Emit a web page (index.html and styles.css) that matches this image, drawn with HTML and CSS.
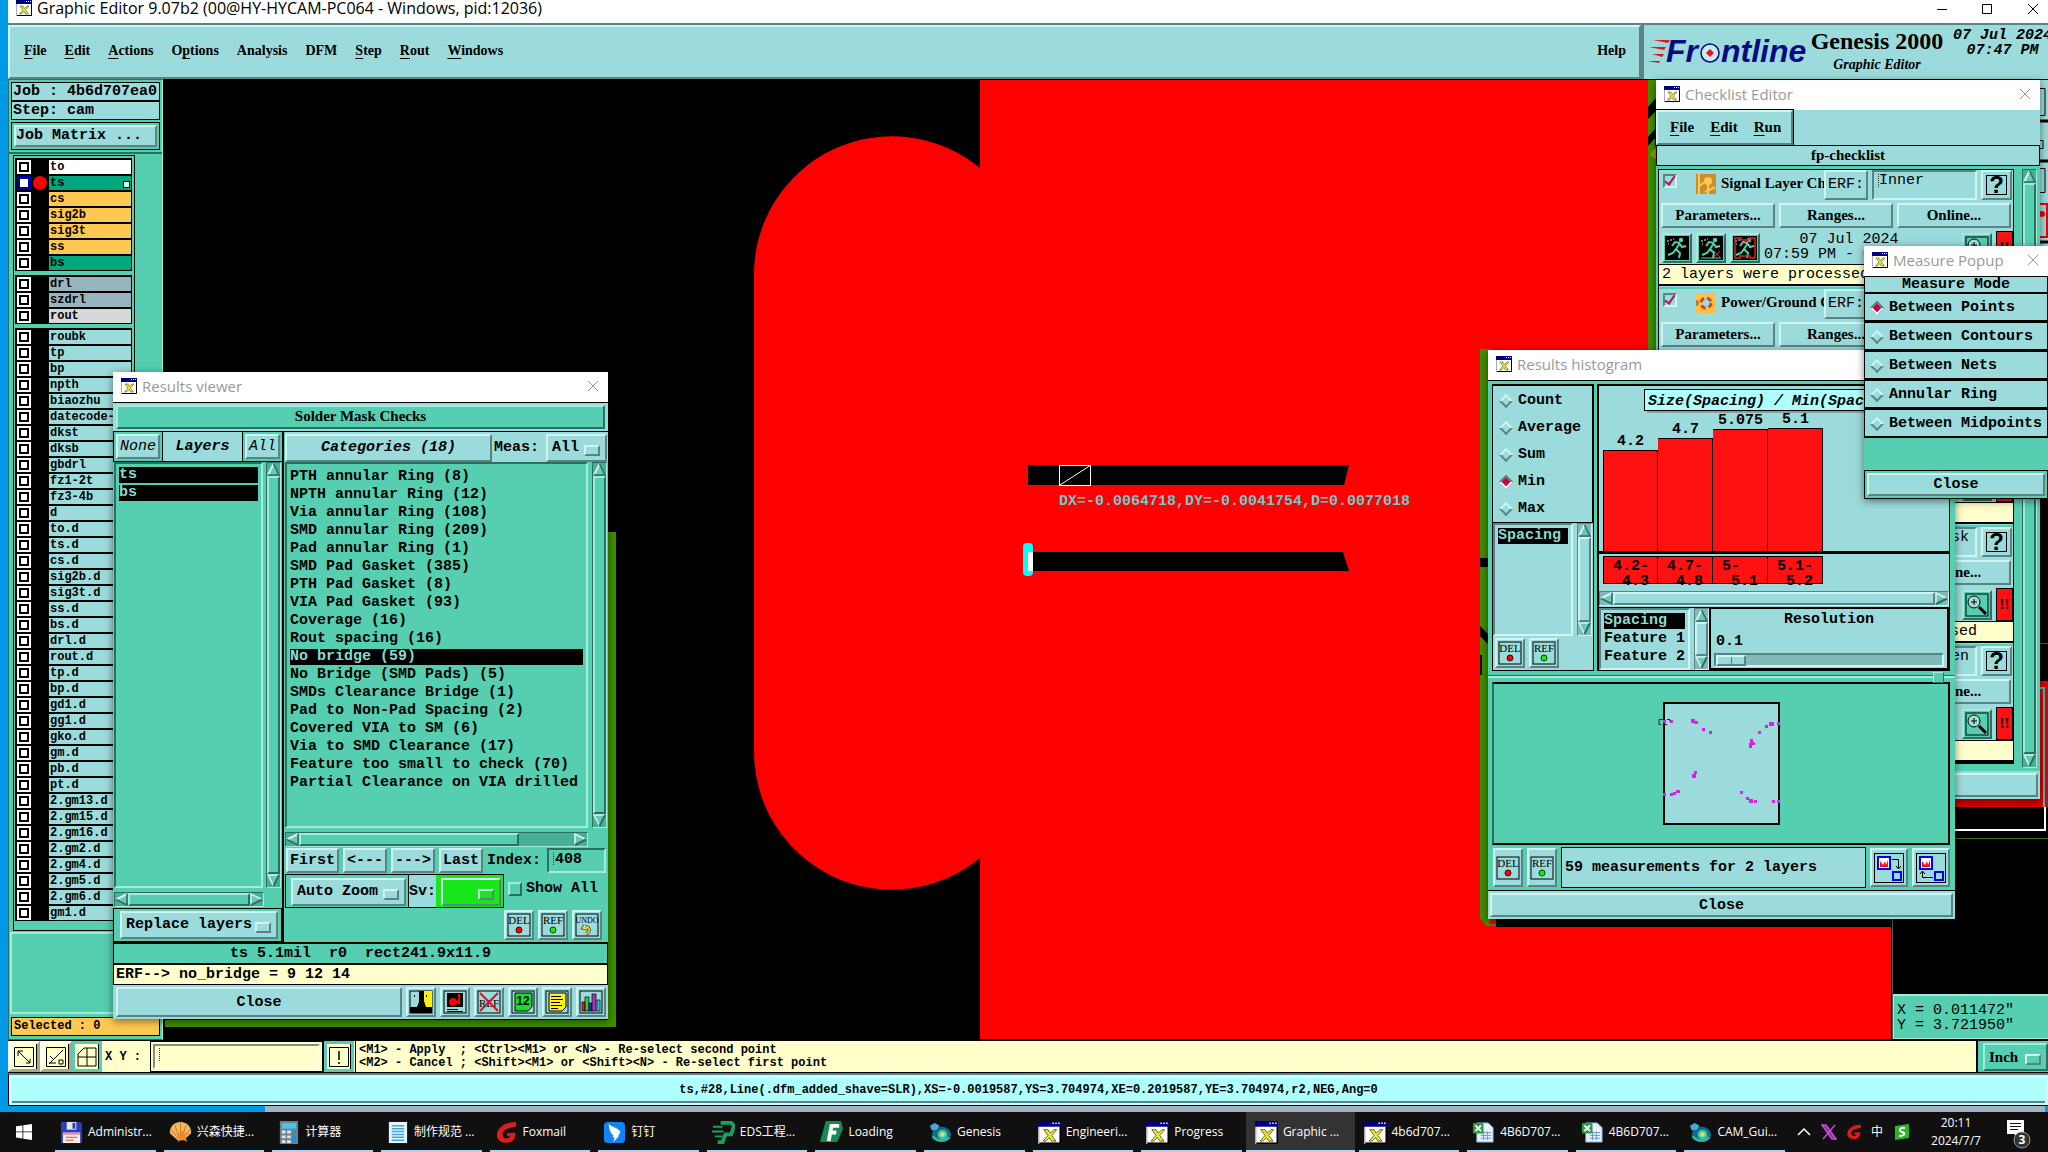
FILE: index.html
```
<!DOCTYPE html>
<html lang="en">
<head>
    <meta charset="UTF-8">
    <meta name="viewport" content="width=device-width, initial-scale=1.0">
    <title>Graphic Editor</title>
    <link rel="stylesheet" href="styles.css">
</head>
<body>

    <!-- shared icons -->
    <svg class="defs" width="0" height="0">
        <symbol id="xwin" viewBox="0 0 16 16">
            <rect width="16" height="16" fill="#aab"/>
            <rect x="1" y="1" width="14" height="14" fill="#fff"/>
            <rect width="16" height="4" fill="#00007c"/>
            <path d="M10 1h1v1h-1zM12 1h1v1h-1zM14 1h1v1h-1z" fill="#fff"/>
            <path d="M15.500 4v11.500H1" fill="none" stroke="#000"/>
            <path d="M4 6h3l1.500 2.500L11 6h2L9.500 10l3 4h-3L8 11.500 5.500 14h-2L7 10z" fill="#f2ea20" stroke="#333" stroke-width=".5"/>
        </symbol>
        <symbol id="close-x" viewBox="0 0 12 12"><path d="M1 1l10 10M11 1L1 11" fill="none" stroke="currentColor"/></symbol>
        <symbol id="up" viewBox="0 0 13 13">
            <path d="M6.500 1L1 12h11z" fill="#6ac8ba"/>
            <path d="M6.500 1L1 12" stroke="#d3f5f1" stroke-width="2"/>
            <path d="M6.500 1L12 12H1" stroke="#2c6f62" stroke-width="1.500" fill="none"/>
        </symbol>
        <symbol id="down" viewBox="0 0 13 13">
            <path d="M6.500 12L1 1h11z" fill="#6ac8ba"/>
            <path d="M12 1H1l5.500 11" stroke="#d3f5f1" stroke-width="1.500" fill="none"/>
            <path d="M6.500 12L12 1" stroke="#2c6f62" stroke-width="2"/>
        </symbol>
        <symbol id="left" viewBox="0 0 13 13">
            <path d="M1 6.500L12 1v11z" fill="#6ac8ba"/>
            <path d="M1 6.500L12 1" stroke="#d3f5f1" stroke-width="2"/>
            <path d="M1 6.500L12 12V1" stroke="#2c6f62" stroke-width="1.500" fill="none"/>
        </symbol>
        <symbol id="right" viewBox="0 0 13 13">
            <path d="M12 6.500L1 1v11z" fill="#6ac8ba"/>
            <path d="M1 12V1l11 5.500" stroke="#d3f5f1" stroke-width="1.500" fill="none"/>
            <path d="M12 6.500L1 12" stroke="#2c6f62" stroke-width="2"/>
        </symbol>
        <symbol id="del" viewBox="0 0 24 24">
            <rect x="1" y="1" width="22" height="22" fill="none" stroke="#000"/>
            <text x="12" y="11" class="ico-text">DEL</text>
            <circle cx="12" cy="17" r="3" fill="#f00" stroke="#400"/>
        </symbol>
        <symbol id="ref" viewBox="0 0 24 24">
            <rect x="1" y="1" width="22" height="22" fill="none" stroke="#000"/>
            <text x="12" y="11" class="ico-text">REF</text>
            <circle cx="12" cy="17" r="3" fill="#1e1" stroke="#040"/>
        </symbol>
        <symbol id="runner" viewBox="0 0 24 24">
            <rect width="24" height="24" fill="#000"/>
            <circle cx="16" cy="4" r="2.200" fill="#55d0b0"/>
            <path d="M15 7l-4 6 4 4-1 5M11 13l-3 4-5 2M15 7l-5-1-3 4M15 8l2 3 4-1" stroke="#55d0b0" stroke-width="2" fill="none"/>
            <path d="M2 5h2M5 4h2M3 8h1M8 3h1" stroke="#cfe"/>
        </symbol>
        <symbol id="lens" viewBox="0 0 24 24">
            <rect x="1" y="1" width="22" height="22" fill="#55cfb0" stroke="#000"/>
            <circle cx="9" cy="9" r="6" fill="#9fe0d4" stroke="#000"/>
            <path d="M6 9h6M9 6v6" stroke="#000"/>
            <path d="M14 14l7 7" stroke="#000" stroke-width="3"/>
        </symbol>
        <symbol id="genesis" viewBox="0 0 24 24">
            <ellipse cx="13" cy="14" rx="10" ry="8" fill="#0d6f86"/>
            <path d="M4 16a10 8 0 0 0 17 1" stroke="#2fb5a0" stroke-width="3" fill="none"/>
            <circle cx="14" cy="14" r="5" fill="#39c7b4"/>
            <circle cx="14" cy="14" r="2.500" fill="#e6d95a"/>
            <path d="M1 5l5-3 5 3-3 4-5 1z" fill="#4aa6d8"/>
        </symbol>
        <symbol id="excel" viewBox="0 0 24 24">
            <path d="M5 2h12l5 5v15H5z" fill="#e8f1fb" stroke="#8aa8cc"/>
            <path d="M9 12h11M9 15h11M9 18h11M12 11v9M16 11v9" stroke="#6c96cc"/>
            <rect x="1" y="2" width="11" height="11" rx="1" fill="#2f9a44"/>
            <path d="M3.500 4.500l6 6M9.500 4.500l-6 6" stroke="#fff" stroke-width="2"/>
        </symbol>
    </svg>

    <main class="desktop">
        <div class="behind"></div>

        <section class="editor">
            <header class="titlebar">
                <svg class="xicon"><use href="#xwin"/></svg>
                <span>Graphic Editor 9.07b2 (00@HY-HYCAM-PC064 - Windows, pid:12036)</span>
                <svg class="win-ctl" viewBox="0 0 110 12"><path d="M9 7.500h10M54.500 2.500h9v9h-9zM100 2l10 10M110 2l-10 10" fill="none" stroke="#000"/></svg>
            </header>

            <div class="menu-row">
                <nav class="menubar">
                    <a href="#"><u>F</u>ile</a>
                    <a href="#"><u>E</u>dit</a>
                    <a href="#"><u>A</u>ctions</a>
                    <a href="#">O<u>p</u>tions</a>
                    <a href="#">Analysis</a>
                    <a href="#">DFM</a>
                    <a href="#"><u>S</u>tep</a>
                    <a href="#"><u>R</u>out</a>
                    <a href="#"><u>W</u>indows</a>
                    <a href="#" class="help">Help</a>
                </nav>
                <div class="brand">
                    <svg class="logo" viewBox="0 0 162 34">
                        <path d="M6 6h17l-2 3zM2 13h17l-2 3zM5 20h12l-2 3zM0 27h13l-1 2z" fill="#e8121e"/>
                        <text x="19" y="28" class="logo-text">Fr</text>
                        <text x="74" y="28" class="logo-text">ntline</text>
                        <circle cx="63" cy="19" r="9" fill="#c9ecf2" stroke="#0a0a82" stroke-width="1.500"/>
                        <path d="M63 15l4 4-4 4-4-4z" fill="#f01020"/>
                    </svg>
                    <div class="product">
                        <b>Genesis 2000</b>
                        <i>Graphic Editor</i>
                    </div>
                    <div class="clock">07 Jul 2024<br>07:47 PM</div>
                </div>
            </div>

            <div class="work">
                <aside class="side">
                    <div class="side-top">
                        <div class="field">Job : 4b6d707ea0</div>
                        <div class="field">Step: cam</div>
                        <div class="matrix"><button class="btn">Job Matrix ...</button></div>
                    </div>
                    <div class="layers" id="layers"></div>
                    <div class="side-fill"></div>
                    <div class="selected">Selected : 0</div>
                </aside>

                <div class="canvas">
                    <svg class="art" viewBox="163 79 1885 961" preserveAspectRatio="xMinYMin slice">
                        <rect x="163" y="79" width="1885" height="961" fill="#000"/>
                        <rect x="980" y="80" width="911" height="959" fill="#f00"/>
                        <path d="M980 168A138 138 0 0 0 754 274V752A138 138 0 0 0 980 858z" fill="#f00"/>
                        <!-- slots -->
                        <path d="M1028 465h321l-5 20h-316zM1028 552h315l6 19h-321z" fill="#000"/>
                        <rect x="1059.500" y="465.500" width="31" height="20" fill="none" stroke="#fff"/>
                        <path d="M1060 485l31-20" stroke="#fff"/>
                        <rect x="1023" y="543" width="10" height="33" rx="4" fill="#0ff"/>
                        <rect x="1028" y="552" width="5" height="19" fill="#fff"/>
                        <text x="1059" y="505" class="measure-text">DX=-0.0064718,DY=-0.0041754,D=0.0077018</text>
                        <!-- green outlines behind the windows -->
                        <path d="M608 532h8v495H165v-7h443z" fill="#3f8f00"/>
                        <path d="M1648 80h10v270h-10zM1480 349h10v575h6v2h-10l-6-8z" fill="#3f8f00"/>
                        <path d="M1648 107l8-9v13l-8 8zM1648 137l8-9v9l-8 9zM1480 558h8v9h-8zM1480 626l8 8v10l-8-8zM1480 655h2v20h-2z" fill="#000"/>
                        <circle cx="1656" cy="154" r="5" fill="#9a9a10"/>
                        <path d="M1496 918h396v9h-396z" fill="#000"/>
                        <rect x="1891" y="80" width="157" height="960" fill="#000"/>
                        <path d="M1892.500 919v120" stroke="#2f6558"/>
                        <path d="M1955 681h93v126h-93z" fill="#e00000"/>
                        <path d="M1955 688h89v119" fill="none" stroke="#4bb" stroke-width="2"/>
                        <path d="M2045 807v23h-90" fill="none" stroke="#fff" stroke-width="2"/>
                        <path d="M2040 643.500h8M1955 838.500h93" stroke="#3c6f10"/>
                        <rect x="2040" y="80" width="8" height="175" fill="#9cdbdb"/>
                        <path d="M2040 121h8M2040 161h8M2040 242h8" stroke="#000" stroke-width="3"/>
                        <path d="M2040 88.500h5v27h-5M2040 140.500h3v8h-3M2040 168.500h5v24h-5" stroke="#000" fill="none"/>
                        <path d="M2040 204h7v33h-7" stroke="#e00" stroke-width="2" fill="none"/>
                        <circle cx="2042" cy="214" r="3" fill="#e00"/>
                    </svg>
                    <div class="coords">X = 0.011472"<br>Y = 3.721950"</div>
                </div>
            </div>

            <div class="command">
                <button class="tool" aria-label="Snap"><svg viewBox="0 0 20 20"><path d="M.500 .500h19v19H.500zM4 4l12 12M4 9V4h5M16 12v4h-4" fill="none" stroke="#000"/></svg></button>
                <button class="tool" aria-label="Angle"><svg viewBox="0 0 20 20"><path d="M.500 .500h19v19H.500zM3 17L17 3M4 9l3 3M3 16h7M13 13h4v4h-4z" fill="none" stroke="#000"/></svg></button>
                <button class="tool teal" aria-label="Grid"><svg viewBox="0 0 20 20"><path d="M1 7l6-6h12v18H1z" fill="#ffffcc" stroke="#000"/><path d="M1 10h18M10 1v18" stroke="#000"/></svg></button>
                <label class="xy" for="xy">X Y :</label>
                <div class="xy-box"><input id="xy" class="caret" type="text"></div>
                <button class="tool teal alert" aria-label="Alert"><svg viewBox="0 0 20 20"><path d="M.500 .500h19v19H.500z" fill="#ffffcc" stroke="#000"/><path d="M10 4v9M10 15v2" stroke="#000" stroke-width="1.500"/></svg></button>
                <pre class="hint">&lt;M1&gt; - Apply  ; &lt;Ctrl&gt;&lt;M1&gt; or &lt;N&gt; - Re-select second point
&lt;M2&gt; - Cancel ; &lt;Shift&gt;&lt;M1&gt; or &lt;Shift&gt;&lt;N&gt; - Re-select first point</pre>
                <div class="unit"><span class="pick green"><select aria-label="Units"><option>Inch</option></select></span></div>
            </div>

            <footer class="status"><div>ts,#28,Line(.dfm_added_shave=SLR),XS=-0.0019587,YS=3.704974,XE=0.2019587,YE=3.704974,r2,NEG,Ang=0</div></footer>
        </section>

        <!-- Results viewer -->
        <section class="window viewer">
            <header class="wtitle"><svg class="xicon"><use href="#xwin"/></svg><span>Results viewer</span><svg class="x"><use href="#close-x"/></svg></header>
            <div class="vhead"><div>Solder Mask Checks</div></div>
            <div class="vbody">
                <div class="vleft">
                    <div class="lhead">
                        <span class="cell"><button class="btn thin">None</button></span>
                        <span class="lname">Layers</span>
                        <span class="cell"><button class="btn thin">All</button></span>
                    </div>
                    <div class="scroller">
                        <ul class="list"><li class="on">ts</li><li class="on">bs</li></ul>
                        <div class="sb"><svg><use href="#up"/></svg><i></i><svg><use href="#down"/></svg></div>
                    </div>
                    <div class="hsb short"><svg><use href="#left"/></svg><i></i><svg><use href="#right"/></svg></div>
                    <div class="replace"><span class="pick"><select aria-label="Layer mode"><option>Replace layers</option></select></span></div>
                </div>
                <div class="vright">
                    <div class="rhead">
                        <button class="btn cat">Categories (18)</button>
                        <label for="meas">Meas:</label>
                        <span class="pick"><select id="meas"><option>All</option></select></span>
                    </div>
                    <div class="scroller">
                        <ul class="list" id="categories"></ul>
                        <div class="sb"><svg><use href="#up"/></svg><i></i><svg><use href="#down"/></svg></div>
                    </div>
                    <div class="hsb"><svg><use href="#left"/></svg><i></i><b></b><svg><use href="#right"/></svg></div>
                    <div class="steps">
                        <button class="btn">First</button>
                        <button class="btn">&lt;---</button>
                        <button class="btn">---&gt;</button>
                        <button class="btn">Last</button>
                        <label for="index">Index:</label>
                        <input id="index" class="caret" type="text" value="408">
                    </div>
                    <div class="zoomrow">
                        <span class="zbox"><span class="pick"><select aria-label="Zoom mode"><option>Auto Zoom</option></select></span></span>
                        <label class="sv" for="sv">Sv:</label>
                        <span class="svbox"><span class="pick lime"><select id="sv"><option></option></select></span></span>
                        <label class="show"><input type="checkbox">Show All</label>
                    </div>
                    <div class="marks">
                        <button class="btn ico" aria-label="Delete"><svg><use href="#del"/></svg></button>
                        <button class="btn ico" aria-label="Reference"><svg><use href="#ref"/></svg></button>
                        <button class="btn ico" aria-label="Undo"><svg viewBox="0 0 24 24"><rect x="1" y="1" width="22" height="22" fill="none" stroke="#000"/><text x="12" y="10" class="ico-text small">UNDO</text><path d="M10 12l-2 3 4 1M9 14c6-1 7 5 2 7" fill="none" stroke="#333" stroke-width="3"/><path d="M10 12l-2 3 4 1M9 14c6-1 7 5 2 7" fill="none" stroke="#f6e83c" stroke-width="1.500"/></svg></button>
                    </div>
                </div>
            </div>
            <pre class="feature">ts 5.1mil  r0  rect241.9x11.9</pre>
            <div class="erf-line">ERF--&gt; no_bridge = 9 12 14</div>
            <div class="vfoot">
                <button class="btn wide">Close</button>
                <button class="btn ico" aria-label="Compare"><svg viewBox="0 0 24 24"><rect x="1" y="1" width="22" height="22" fill="#9cdbdb" stroke="#000"/><path d="M14 1h9v17h-9z" fill="#ffee10"/><path d="M10 1h5v10l2 6h6v6H1v-6h7l2-5zM5 5h1v2H5zM17 5h1v2h-1z" fill="#000"/></svg></button>
                <button class="btn ico" aria-label="Snapshot"><svg viewBox="0 0 24 24"><rect x="1" y="1" width="22" height="22" fill="none" stroke="#000"/><rect x="4" y="3" width="16" height="14" fill="#000"/><circle cx="10" cy="12" r="4" fill="#f00"/><path d="M12 12h5M16 4v10" stroke="#f00" stroke-width="2"/><path d="M4 19.500h11M4 21.500h16" stroke="#000"/></svg></button>
                <button class="btn ico" aria-label="Clear reference"><svg viewBox="0 0 24 24"><rect x="1" y="1" width="22" height="22" fill="none" stroke="#000"/><text x="12" y="17" class="ico-text">REF</text><path d="M3 3l18 18M21 3L3 21" stroke="#e01020" stroke-width="2"/></svg></button>
                <button class="btn ico" aria-label="Numbers"><svg viewBox="0 0 24 24"><rect x="1" y="1" width="22" height="22" fill="none" stroke="#000"/><path d="M4 3h17v14l-4 4H4z" fill="#10e030" stroke="#000"/><text x="12" y="15" class="ico-num">12</text></svg></button>
                <button class="btn ico" aria-label="Notes"><svg viewBox="0 0 24 24"><rect x="1" y="1" width="22" height="22" fill="none" stroke="#000"/><path d="M4 3h17v14l-4 4H4z" fill="#fff020" stroke="#000"/><path d="M6 6.500h10M6 9.500h12M6 12.500h9M6 15.500h11M6 18.500h7" stroke="#000"/></svg></button>
                <button class="btn ico" aria-label="Histogram"><svg viewBox="0 0 24 24"><rect x="1" y="1" width="22" height="22" fill="none" stroke="#000"/><g stroke="#000" stroke-width=".7"><rect x="3" y="12" width="3" height="9" fill="#e02020"/><rect x="6" y="7" width="4" height="14" fill="#20d040"/><rect x="10" y="13" width="3" height="8" fill="#2030e0"/><rect x="13" y="4" width="4" height="17" fill="#b030c0"/><rect x="18" y="10" width="3" height="11" fill="#20d0f0"/></g></svg></button>
            </div>
        </section>

        <!-- Checklist Editor -->
        <section class="window checklist">
            <header class="wtitle"><svg class="xicon"><use href="#xwin"/></svg><span>Checklist Editor</span><svg class="x"><use href="#close-x"/></svg></header>
            <div class="cmenu"><nav><a href="#"><u>F</u>ile</a><a href="#"><u>E</u>dit</a><a href="#"><u>R</u>un</a></nav></div>
            <div class="cname">fp-checklist</div>
            <div class="cbody">
                <div class="checks" id="checks"></div>
                <div class="sb"><svg><use href="#up"/></svg><i></i><svg><use href="#down"/></svg></div>
            </div>
            <div class="cfoot"><button class="btn">Close</button></div>
        </section>

        <!-- Results histogram -->
        <section class="window histogram">
            <header class="wtitle"><svg class="xicon"><use href="#xwin"/></svg><span>Results histogram</span></header>
            <div class="hbody">
                <div class="hleft">
                    <div class="radios">
                        <label><input type="radio" name="stat">Count</label>
                        <label><input type="radio" name="stat">Average</label>
                        <label><input type="radio" name="stat">Sum</label>
                        <label><input type="radio" name="stat" checked>Min</label>
                        <label><input type="radio" name="stat">Max</label>
                    </div>
                    <div class="scroller pale">
                        <ul class="list"><li class="on">Spacing</li></ul>
                        <div class="sb"><svg><use href="#up"/></svg><i></i><svg><use href="#down"/></svg></div>
                    </div>
                    <div class="marks">
                        <button class="btn ico" aria-label="Delete"><svg><use href="#del"/></svg></button>
                        <button class="btn ico" aria-label="Reference"><svg><use href="#ref"/></svg></button>
                    </div>
                </div>
                <div class="hright">
                    <div class="chart">
                        <div class="ctitle">Size(Spacing) / Min(Spacing)</div>
                        <div class="bars">
                            <div><span>4.2</span><i style="height: 101px"></i></div>
                            <div><span>4.7</span><i style="height: 113px"></i></div>
                            <div><span>5.075</span><i style="height: 122px"></i></div>
                            <div><span>5.1</span><i style="height: 123px"></i></div>
                        </div>
                        <div class="bins">
                            <pre>4.2-
 4.3</pre>
                            <pre>4.7-
 4.8</pre>
                            <pre>5-
 5.1</pre>
                            <pre>5.1-
 5.2</pre>
                        </div>
                    </div>
                    <div class="hsb pale"><svg><use href="#left"/></svg><i></i><svg><use href="#right"/></svg></div>
                    <div class="reso-row">
                        <div class="scroller pale">
                            <ul class="list"><li class="on">Spacing</li><li>Feature 1</li><li>Feature 2</li></ul>
                            <div class="sb"><svg><use href="#up"/></svg><i></i><svg><use href="#down"/></svg></div>
                        </div>
                        <div class="reso">
                            <label for="reso">Resolution</label>
                            <output for="reso">0.1</output>
                            <input id="reso" type="range" min="0" max="100" value="0">
                        </div>
                    </div>
                </div>
            </div>
            <div class="sash"></div>
            <div class="board">
                <svg viewBox="0 0 117 123">
                    <rect x="1" y="1" width="115" height="121" fill="#9cdbdb" stroke="#000" stroke-width="2"/>
                    <g fill="#d820e8">
                        <path d="M0 18h3v3H0zM7 18h3v3H7zM28 17h4v4h-4zM31 19h4v3h-4zM39 26h3v3h-3zM46 29h3v3h-3z"/>
                        <path d="M87 37h3v3h2v3h-3v3h-3v-5h1zM95 29h3v3h-3zM102 23h3v3h-3zM106 20h5v4h-5zM114 20h3v3h-3z"/>
                        <path d="M31 69h3v3h-1v4h-4v-4h2zM0 91h3v3H0zM7 91h3v3H7zM10 90h3v3h-3zM13 88h4v3h-4zM77 89h3v3h-3zM83 95h3v3h-3zM86 97h4v4h-4zM91 98h3v3h-3zM109 98h3v3h-3zM114 98h3v3h-3z"/>
                    </g>
                    <path d="M0 17.500h-4v5h2M4 22.500H2M4 17.500h3v2" stroke="#222" fill="none"/>
                </svg>
            </div>
            <div class="mrow">
                <button class="btn ico" aria-label="Delete"><svg><use href="#del"/></svg></button>
                <button class="btn ico" aria-label="Reference"><svg><use href="#ref"/></svg></button>
                <div class="mtext">59 measurements for 2 layers</div>
                <button class="btn big" aria-label="Export"><svg viewBox="0 0 30 30"><rect x=".500" y=".500" width="29" height="29" fill="none" stroke="#000"/><rect x="4" y="4" width="12" height="12" fill="#fff" stroke="#00f" stroke-width="2"/><path d="M6 14V8l3 4 2-4 1 4 2-5v7z" fill="#f01020"/><rect x="19" y="19" width="8" height="8" fill="#9cdbdb" stroke="#00f" stroke-width="2"/><path d="M18 6.500h6.500V16M22 13l2.500 3 2.500-3" fill="none" stroke="#000"/></svg></button>
                <button class="btn big" aria-label="Import"><svg viewBox="0 0 30 30"><rect x=".500" y=".500" width="29" height="29" fill="none" stroke="#000"/><rect x="4" y="4" width="12" height="12" fill="#fff" stroke="#00f" stroke-width="2"/><path d="M6 14V8l3 4 2-4 1 4 2-5v7z" fill="#f01020"/><rect x="19" y="19" width="8" height="8" fill="#9cdbdb" stroke="#00f" stroke-width="2"/><path d="M17 24.500H6.500V19M4 21l2.500-3L9 21" fill="none" stroke="#000"/></svg></button>
            </div>
            <div class="hfoot"><button class="btn">Close</button></div>
        </section>

        <!-- Measure Popup -->
        <section class="window measure">
            <header class="wtitle"><svg class="xicon"><use href="#xwin"/></svg><span>Measure Popup</span><svg class="x"><use href="#close-x"/></svg></header>
            <div class="mhead">Measure Mode</div>
            <div class="modes">
                <label><input type="radio" name="mode" checked>Between Points</label>
                <label><input type="radio" name="mode">Between Contours</label>
                <label><input type="radio" name="mode">Between Nets</label>
                <label><input type="radio" name="mode">Annular Ring</label>
                <label><input type="radio" name="mode">Between Midpoints</label>
            </div>
            <div class="mfoot"><button class="btn">Close</button></div>
        </section>
    </main>

    <nav class="taskbar">
        <button class="start" aria-label="Start"><svg viewBox="0 0 16 16"><path d="M0 2.300l6.500-.9v6.100H0zM7.300 1.300L16 0v7.500H7.300zM0 8.300h6.500v6.200L0 13.600zM7.300 8.300H16V16l-8.700-1.300z" fill="#fff"/></svg></button>
        <div class="tasks">
            <button><svg viewBox="0 0 24 24"><path d="M1 1h20l2 2v20H1z" fill="#2c3fb8"/><rect x="7" y="1" width="10" height="8" fill="#e4e8f4"/><rect x="13" y="2" width="3" height="6" fill="#2c3fb8"/><rect x="3" y="12" width="18" height="11" fill="#f6eaea"/><path d="M3 13.500h18M6 17h12M6 20h8" stroke="#d44"/></svg>Administr...</button>
            <button><svg viewBox="0 0 24 24"><path d="M12 1C5 1 0 7 1 13l8 7h6l8-7c1-6-4-12-11-12z" fill="#f3b85e"/><path d="M12 2v17M6 4l5 15M18 4l-5 15M2 9l8 10M22 9l-8 10" stroke="#c97c1e" fill="none"/><path d="M14 9l2 4h5l-4 3 2 6-5-3-5 3 2-6-4-3h5z" fill="#f08a24"/></svg>兴森快捷...</button>
            <button><svg viewBox="0 0 24 24"><rect x="3" y="0" width="19" height="24" fill="#6f7f8c"/><rect x="5" y="2" width="15" height="6" fill="#46c4ec"/><path d="M5 10h4v3H5zM10.500 10h4v3h-4zM5 15h4v3H5zM10.500 15h4v3h-4zM5 20h4v3H5zM10.500 20h4v3h-4z" fill="#dde6ee"/><path d="M16 10h4v3h-4zM16 15h4v8h-4z" fill="#2b8ed0"/></svg>计算器</button>
            <button><svg viewBox="0 0 24 24"><path d="M3 1h19v22H3z" fill="#e6f6fc"/><path d="M6 5h13M6 8h13M6 11h13M6 14h13M6 17h13M6 20h13" stroke="#3fa6d8" stroke-width="1.500"/></svg>制作规范 ...</button>
            <button><svg viewBox="0 0 24 24"><path d="M22 1C12 1 2 6 2 15c0 7 10 10 16 6 3-3 4-6 3-9l-9 1 1 3h3c-2 3-8 3-8-2 0-6 8-7 14-8z" fill="#d81f1a"/></svg>Foxmail</button>
            <button><svg viewBox="0 0 24 24"><rect x="1" y="1" width="22" height="22" rx="4" fill="#1184f5"/><path d="M6 3c4 4 10 4 12 8 0 3-3 4-3 4h2l-6 7 1-5h-2l1-2c-3-2-5-7-5-12z" fill="#fff"/></svg>钉钉</button>
            <button><svg viewBox="0 0 24 24"><path d="M9 2h11l3 3-3 9h-6l-3 8H6" fill="none" stroke="#1aa05c" stroke-width="4"/><path d="M1 6h10M0 11h12M3 16h8" stroke="#1aa05c" stroke-width="2"/></svg>EDS工程...</button>
            <button><svg viewBox="0 0 24 24"><path d="M6 0h16l2 8-6 14H0z" fill="#128a50"/><path d="M9 21l3-16h8M11 12h6" fill="none" stroke="#fff" stroke-width="4"/></svg>Loading</button>
            <button><svg><use href="#genesis"/></svg>Genesis</button>
            <button><svg><use href="#xwin"/></svg>Engineeri...</button>
            <button><svg><use href="#xwin"/></svg>Progress</button>
            <button class="active"><svg><use href="#xwin"/></svg>Graphic ...</button>
            <button><svg><use href="#xwin"/></svg>4b6d707...</button>
            <button><svg><use href="#excel"/></svg>4B6D707...</button>
            <button><svg><use href="#excel"/></svg>4B6D707...</button>
            <button><svg><use href="#genesis"/></svg>CAM_Gui...</button>
        </div>
        <div class="tray">
            <svg viewBox="0 0 16 16"><path d="M2 11l6-6 6 6" fill="none" stroke="#fff" stroke-width="1.500"/></svg>
            <svg viewBox="0 0 16 16"><path d="M1 1h4l10 14h-4zM14 1L2 15" fill="#a020b0" stroke="#c050d0" stroke-width="1.500"/></svg>
            <svg viewBox="0 0 24 24"><path d="M22 1C12 1 2 6 2 15c0 7 10 10 16 6 3-3 4-6 3-9l-9 1 1 3h3c-2 3-8 3-8-2 0-6 8-7 14-8z" fill="#d81f1a"/></svg>
            <span>中</span>
            <svg viewBox="0 0 16 16"><path d="M1 2l14-2v14L1 16z" fill="#2db52d"/><path d="M11 4c-5-1-7 3-3 4s3 4-3 4" fill="none" stroke="#fff" stroke-width="2"/></svg>
        </div>
        <div class="time">20:11<br>2024/7/7</div>
        <div class="notes">
            <svg viewBox="0 0 26 32"><path d="M1 1h17v14h-6v5l-4-5H1z" fill="#fff"/><path d="M4 4.500h11M4 7.500h11M4 10.500h8" stroke="#111"/><circle cx="16" cy="21" r="8" fill="#333" stroke="#999"/><text x="16" y="25" class="badge">3</text></svg>
        </div>
    </nav>

    <script>
        const groups = [
            [["to", "white"], ["ts", "mask"], ["cs", "signal"], ["sig2b", "signal"], ["sig3t", "signal"], ["ss", "signal"], ["bs", "mask"]],
            [["drl", "drill"], ["szdrl", "drill"], ["rout", "rout"]],
            ("roubk tp bp npth biaozhu datecode- dkst dksb gbdrl fz1-2t fz3-4b d to.d ts.d cs.d sig2b.d sig3t.d ss.d bs.d " +
             "drl.d rout.d tp.d bp.d gd1.d gg1.d gko.d gm.d pb.d pt.d 2.gm13.d 2.gm15.d 2.gm16.d 2.gm2.d 2.gm4.d 2.gm5.d 2.gm6.d gm1.d")
                .split(" ").map(n => [n, ""])
        ];

        document.getElementById("layers").innerHTML = groups.map(rows =>
            "<div class='group'>" + rows.map(([name, kind]) =>
                `<label class="layer ${name === "ts" ? "work-layer" : ""}"><input type="checkbox"><i></i><span class="${kind}">${name}</span></label>`
            ).join("") + "</div>"
        ).join("");

        const categories = [
            "PTH annular Ring (8)", "NPTH annular Ring (12)", "Via annular Ring (108)", "SMD annular Ring (209)",
            "Pad annular Ring (1)", "SMD Pad Gasket (385)", "PTH Pad Gasket (8)", "VIA Pad Gasket (93)",
            "Coverage (16)", "Rout spacing (16)", "No bridge (59)", "No Bridge (SMD Pads) (5)",
            "SMDs Clearance Bridge (1)", "Pad to Non-Pad Spacing (2)", "Covered VIA to SM (6)",
            "Via to SMD Clearance (17)", "Feature too small to check (70)", "Partial Clearance on VIA drilled"
        ];

        document.getElementById("categories").innerHTML = categories.map(c =>
            `<li class="${c === "No bridge (59)" ? "on" : ""}">${c}</li>`
        ).join("");

        const checks = [
            ["Signal Layer Ch", "Inner", "2 layers were processed"],
            ["Power/Ground C", "Inner", "2 layers were processed"],
            ["Drill Checks", "Drill", "2 layers were processed"],
            ["Solder Mask", "Soldermask", "2 layers were processed, 0 bypassed"],
            ["Silk Screen", "Silkscreen", "2 layers were processed"]
        ];

        const checkIcons = [
            '<rect width="20" height="20" fill="#c98d32"/><circle cx="12" cy="7" r="4" fill="#ffc94f"/><path d="M3 0v20M3 12l6-4M9 18l10-5M12 11v9" stroke="#ffc94f" stroke-width="2"/>',
            '<rect width="20" height="20" fill="#ffc04a"/><circle cx="10" cy="10" r="5" fill="#9cdbdb" stroke="#e04020" stroke-width="3" stroke-dasharray="5 3"/><circle cx="0" cy="10" r="3" fill="#b08030"/>'
        ];

        document.getElementById("checks").innerHTML = checks.map(([name, erf, msg], i) => `
            <div class="check">
                <div class="c1">
                    <input type="checkbox" checked aria-label="${name}">
                    <svg class="cico" viewBox="0 0 20 20">${checkIcons[i % 2]}</svg>
                    <b>${name}</b>
                    <button class="btn erf">ERF:</button>
                    <input type="text" class="caret" value="${erf}" aria-label="ERF">
                    <button class="btn q">?</button>
                </div>
                <div class="c2">
                    <button class="btn">Parameters...</button>
                    <button class="btn">Ranges...</button>
                    <button class="btn">Online...</button>
                </div>
                <div class="c3">
                    <button class="btn run" aria-label="Run"><svg><use href="#runner"/></svg></button>
                    <button class="btn run" aria-label="Run on area"><svg viewBox="0 0 24 24"><use href="#runner"/><path d="M15 15l6 6M21 15l-6 6" stroke="#e02020"/><path d="M2 22h20" stroke="#55d0b0"/></svg></button>
                    <button class="btn run" aria-label="Run in profile"><svg viewBox="0 0 24 24"><use href="#runner"/><path d="M2 2h6v2h8V2h6v20h-5v-2H7v2H2z" fill="none" stroke="#e02020" stroke-width="1.500"/></svg></button>
                    <span>07 Jul 2024<br>07:59 PM - 07:59 PM</span>
                    <button class="btn run" aria-label="Results"><svg><use href="#lens"/></svg></button>
                    <b>!!</b>
                </div>
                <div class="c4">${msg}</div>
            </div>`).join("");
    </script>

</body>
</html>
```
FILE: styles.css
```
:root {
    --pale: #9cdbdb;
    --pale-hi: #d0f3f3;
    --pale-lo: #5a8484;
    --teal: #55cfb0;
    --teal-hi: #a5eadb;
    --teal-lo: #2b6f5f;
    --cream: #ffffcc;
    --mono: "Liberation Mono", "Courier New", monospace;
    --serif: "Liberation Serif", "Times New Roman", serif;
    --ui: "Open Sans", "Noto Sans", "Noto Sans CJK SC", sans-serif;
}
* {
    box-sizing: border-box;
}
body {
    margin: 0;
    height: 100vh;
    display: flex;
    flex-direction: column;
    overflow: hidden;
    font: bold 15px/18px var(--mono);
    color: #000;
}
button, input, select {
    font: inherit;
    color: inherit;
    margin: 0;
    padding: 0;
    border-radius: 0;
}
select, input {
    appearance: none;
    outline: none;
    background-color: transparent;
}
a {
    color: inherit;
    text-decoration: none;
}
u {
    text-underline-offset: 3px;
}
pre {
    margin: 0;
    font: inherit;
}
svg {
    display: block;
}
.defs {
    position: absolute;
}

/* text inside drawings */
.ico-text {
    font: 11px var(--serif);
    text-anchor: middle;
}
.ico-text.small {
    font-size: 8px;
}
.ico-num {
    font: bold 12px "Liberation Sans", sans-serif;
    text-anchor: middle;
}
.logo-text {
    font: italic bold 32px "Liberation Sans", Arial, sans-serif;
    fill: #0a0a82;
}
.measure-text {
    font: bold 15px var(--mono);
    fill: #6ccccc;
}
.badge {
    font: bold 12px var(--ui);
    fill: #fff;
    text-anchor: middle;
}

/* common controls */
.btn {
    background: var(--pale);
    border: 2px solid;
    border-color: var(--pale-hi) var(--pale-lo) var(--pale-lo) var(--pale-hi);
    white-space: nowrap;
}
.btn.ico {
    width: 30px;
    height: 30px;
    display: flex;
    align-items: center;
    justify-content: center;
}
.btn.ico svg {
    width: 24px;
    height: 24px;
    flex: none;
}
.pick {
    position: relative;
    display: block;
}
.pick select {
    width: 100%;
    height: 28px;
    padding: 0 4px;
    background: var(--pale);
    border: 2px solid;
    border-color: var(--pale-hi) var(--pale-lo) var(--pale-lo) var(--pale-hi);
}
.pick::after {
    content: "";
    position: absolute;
    right: 7px;
    top: 11px;
    width: 12px;
    height: 7px;
    border: 2px solid;
    border-color: var(--pale-hi) var(--pale-lo) var(--pale-lo) var(--pale-hi);
    pointer-events: none;
}
.pick.green select {
    background: var(--teal);
    border-color: var(--teal-hi) var(--teal-lo) var(--teal-lo) var(--teal-hi);
}
.pick.lime select {
    background: #18e818;
}
.list {
    flex: 1;
    min-width: 0;
    margin: 0;
    padding: 3px;
    list-style: none;
    overflow: hidden;
    border: 2px solid;
    border-color: var(--teal-lo) var(--teal-hi) var(--teal-hi) var(--teal-lo);
}
.list li {
    height: 16px;
    line-height: 16px;
    margin-bottom: 2px;
    white-space: nowrap;
}
.list .on {
    background: #000;
    color: #8fd8cc;
}
.scroller {
    display: flex;
    gap: 4px;
    min-height: 0;
}
.sb {
    width: 15px;
    display: flex;
    flex-direction: column;
    border: 1px solid;
    border-color: var(--teal-lo) var(--teal-hi) var(--teal-hi) var(--teal-lo);
    background: #45b095;
}
.sb svg, .hsb svg {
    width: 13px;
    height: 13px;
    flex: none;
}
.sb i, .hsb i {
    flex: 1;
    background: var(--teal);
    border: 2px solid;
    border-color: var(--teal-hi) var(--teal-lo) var(--teal-lo) var(--teal-hi);
}
.hsb {
    height: 15px;
    display: flex;
    border: 1px solid;
    border-color: var(--teal-lo) var(--teal-hi) var(--teal-hi) var(--teal-lo);
    background: #45b095;
}
.pale .list, .pale .sb, .hsb.pale {
    border-color: var(--pale-lo) var(--pale-hi) var(--pale-hi) var(--pale-lo);
}
.pale .sb i, .hsb.pale i {
    background: var(--pale);
    border-color: var(--pale-hi) var(--pale-lo) var(--pale-lo) var(--pale-hi);
}
.pale .sb, .hsb.pale {
    background: #85b8b8;
}
.xicon {
    width: 16px;
    height: 16px;
    flex: none;
}

/* desktop and main window */
.desktop {
    position: relative;
    flex: 1;
    min-height: 0;
    padding: 0 0 6px 8px;
    background: #0099e5;
    overflow: hidden;
}
.behind {
    position: absolute;
    left: 265px;
    right: 3px;
    bottom: 0;
    height: 7px;
    background: #a3b2c2;
    border-top: 1px solid #456;
}
.editor {
    position: relative;
    height: 100%;
    display: flex;
    flex-direction: column;
    background: var(--pale);
}
.titlebar {
    height: 23px;
    padding: 0 10px 8px 8px;
    display: flex;
    align-items: center;
    gap: 5px;
    background: #fff;
    font: 16px/16px var(--ui);
}
.win-ctl {
    width: 110px;
    height: 12px;
    margin-left: auto;
}
.menu-row {
    height: 56px;
    display: flex;
    border-top: 2px solid var(--pale-lo);
}
.menubar {
    flex: 1;
    display: flex;
    align-items: center;
    gap: 18px;
    padding: 0 13px 3px 14px;
    font: bold 14px/18px var(--serif);
    border: 2px solid;
    border-color: var(--pale-hi) var(--pale-lo) var(--pale-lo) var(--pale-hi);
}
.menubar .help {
    margin-left: auto;
}
.brand {
    width: 407px;
    display: flex;
    padding: 3px 0 0 3px;
    border-left: 3px solid var(--pale-lo);
    overflow: hidden;
}
.logo {
    width: 162px;
    height: 34px;
    margin-top: 6px;
    flex: none;
}
.product {
    width: 136px;
    flex: none;
    text-align: center;
    font-family: var(--serif);
    white-space: nowrap;
}
.product b {
    display: block;
    font-size: 24px;
    line-height: 26px;
}
.product i {
    display: block;
    font-size: 14px;
    line-height: 22px;
}
.clock {
    flex: none;
    margin-left: 8px;
    font: italic bold 15px/15px var(--mono);
    text-align: center;
}
.work {
    flex: 1;
    min-height: 0;
    display: flex;
}
.side {
    width: 155px;
    display: flex;
    flex-direction: column;
    background: var(--teal);
    border: 1px solid var(--teal-lo);
    border-right-color: var(--teal-hi);
}
.side-top {
    padding: 2px;
    border-bottom: 2px solid var(--teal-lo);
}
.field {
    height: 19px;
    line-height: 18px;
    padding-left: 1px;
    background: var(--pale);
    border: 1px solid #000;
    white-space: nowrap;
}
.matrix {
    margin-top: 2px;
    padding: 2px;
    border: 1px solid #000;
}
.matrix .btn {
    width: 100%;
    height: 22px;
    line-height: 18px;
    text-align: left;
}
.layers {
    width: 122px;
    margin: 1px 0 0 4px;
    padding: 2px 2px 9px 1px;
    border: 1px solid #000;
    display: flex;
    flex-direction: column;
    gap: 4px;
}
.group {
    background: #000;
    padding: 1px 1px 0;
}
.layer {
    display: flex;
    align-items: center;
    height: 16px;
    padding-left: 1px;
}
.layer input {
    width: 14px;
    height: 14px;
    background: #fff;
    border: 2px solid #fff;
    box-shadow: inset 0 0 0 2px #000;
}
.layer i {
    width: 14px;
    height: 14px;
    margin: 0 2px;
    border-radius: 50%;
}
.work-layer i {
    background: #f00;
}
.work-layer input {
    border-color: #0000a0;
    box-shadow: inset 0 0 0 1px #0000a0;
}
.work-layer span::after {
    content: "";
    float: right;
    width: 5px;
    height: 5px;
    margin: 5px 1px;
    border: 1px solid #000;
    background: #cfe;
}
.layer span {
    flex: 1;
    height: 14px;
    padding-left: 1px;
    background: var(--pale);
    font-size: 12px;
    line-height: 14px;
}
.layer .white { background: #fff; }
.layer .mask { background: #00a67c; }
.layer .signal { background: #ffc850; }
.layer .drill { background: #98b4be; }
.layer .rout { background: #d8d8d8; }
.side-fill {
    flex: 1;
    margin: 1px;
    border: 2px solid;
    border-color: var(--teal-hi) var(--teal) var(--teal-hi) var(--teal-hi);
}
.selected {
    height: 19px;
    margin: 2px 2px 3px;
    padding-left: 2px;
    background: #ffc850;
    border: 1px solid #000;
    font-size: 12px;
    line-height: 17px;
}
.canvas {
    position: relative;
    flex: 1;
    min-width: 0;
    background: #000;
}
.art {
    width: 100%;
    height: 100%;
}
.coords {
    position: absolute;
    right: 0;
    bottom: 1px;
    width: 155px;
    height: 45px;
    padding: 7px 3px;
    background: var(--teal);
    border: 2px solid var(--teal-hi);
    border-width: 2px 0 1px 1px;
    font: 15px/15px var(--mono);
}

/* command row */
.command {
    height: 33px;
    display: flex;
    background: var(--cream);
    border-top: 1px solid #000;
    border-bottom: 1px solid #000;
}
.tool {
    width: 32px;
    padding: 0;
    display: flex;
    align-items: center;
    justify-content: center;
    background: var(--cream);
    border: 3px solid;
    border-color: #fffff0 #a8a888 #a8a888 #fffff0;
    box-shadow: inset -1px 0 #000;
}
.tool svg {
    width: 20px;
    height: 20px;
}
.tool.teal {
    width: 30px;
    border-color: var(--teal);
}
.xy {
    width: 48px;
    padding-left: 3px;
    font-size: 12px;
    line-height: 32px;
    white-space: nowrap;
}
.xy-box {
    width: 174px;
    padding: 2px;
    border: 1px solid #000;
    border-right-width: 2px;
}
.xy-box input {
    width: 100%;
    height: 100%;
    background-color: var(--cream);
    border: 2px solid;
    border-color: #8c8c74 #ffffe8 #ffffe8 #8c8c74;
}
/* motif style text cursor */
.caret {
    background-image: repeating-linear-gradient(#333 0 1px, transparent 1px 2px);
    background-size: 1px 14px;
    background-position: 4px 2px;
    background-repeat: no-repeat;
}
.hint {
    flex: 1;
    margin-left: 1px;
    padding: 3px 3px 0;
    border-left: 1px solid #000;
    font-size: 12px;
    line-height: 13px;
}
.unit {
    width: 72px;
    padding: 2px 0 0 5px;
    background: var(--teal);
    border-left: 2px solid #000;
    font-family: var(--serif);
}
.status {
    height: 33px;
    padding: 3px;
    background: #c8ffff;
    border: 1px solid #000;
    border-width: 2px 0 1px 1px;
    border-top-color: var(--pale-lo);
}
.status div {
    height: 25px;
    background: #b0ffff;
    border-bottom: 2px solid var(--pale-lo);
    font-size: 12px;
    line-height: 24px;
    text-align: center;
}

/* floating windows */
.window {
    position: absolute;
    display: flex;
    flex-direction: column;
    background: var(--teal);
    box-shadow: 0 2px 8px rgba(0, 0, 0, 0.5);
}
.wtitle {
    height: 30px;
    flex: none;
    padding: 0 9px 2px 8px;
    display: flex;
    align-items: center;
    gap: 5px;
    background: #fff;
    color: #999;
    font: 15px/18px var(--ui);
}
.wtitle .x {
    width: 12px;
    height: 12px;
    margin-left: auto;
}

.viewer {
    left: 113px;
    top: 372px;
    width: 495px;
    height: 647px;
}
.vhead {
    height: 30px;
    padding: 2px 3px;
    background: var(--pale);
    border-top: 1px solid #000;
    border-bottom: 1px solid #000;
}
.vhead div {
    height: 24px;
    background: var(--teal);
    border: 2px solid;
    border-color: var(--teal-hi) var(--teal-lo) var(--teal-lo) var(--teal-hi);
    font: bold 15px/18px var(--serif);
    text-align: center;
}
.vbody {
    flex: 1;
    min-height: 0;
    display: flex;
}
.vleft {
    width: 171px;
    display: flex;
    flex-direction: column;
    border-right: 2px solid #000;
}
.vleft .scroller {
    flex: 1;
    gap: 3px;
    padding: 0 1px;
}
.lhead {
    height: 30px;
    display: flex;
    border-bottom: 1px solid #000;
}
.lhead .cell {
    padding: 2px;
    border-left: 1px solid #000;
}
.lhead .btn {
    height: 25px;
    padding: 0 2px;
    font: italic 15px/20px var(--mono);
}
.lname {
    flex: 1;
    background: var(--pale);
    border-left: 1px solid #000;
    font-style: italic;
    line-height: 30px;
    text-align: center;
}
.hsb.short {
    width: 150px;
    margin: 4px 1px 1px;
}
.replace {
    height: 34px;
    padding: 2px 3px 2px 6px;
    border: 1px solid #000;
}
.vright {
    flex: 1;
    min-width: 0;
    display: flex;
    flex-direction: column;
    padding-left: 1px;
}
.rhead {
    height: 30px;
    display: flex;
    align-items: center;
    gap: 2px;
    padding-top: 1px;
    background: var(--pale);
}
.rhead .cat {
    width: 207px;
    height: 28px;
    font-style: italic;
}
.rhead label {
    flex: 1;
}
.rhead .pick {
    width: 61px;
    margin-right: 1px;
}
.vright .scroller {
    flex: 1;
    padding-right: 1px;
}
.vright .list {
    padding-top: 5px;
}
.vright .hsb {
    width: 303px;
    margin: 4px 0 1px;
}
.vright .hsb b {
    width: 55px;
}
.steps {
    height: 25px;
    display: flex;
    gap: 4px;
    padding: 0 2px 0 1px;
}
.steps .btn {
    padding: 1px 2px 0;
}
.steps label {
    line-height: 25px;
    flex: 1;
}
.steps input {
    width: 59px;
    padding: 0 6px 2px;
    background-color: var(--teal);
    border: 2px solid;
    border-color: var(--teal-lo) var(--teal-hi) var(--teal-hi) var(--teal-lo);
}
.zoomrow {
    height: 34px;
    margin-top: 1px;
    display: flex;
}
.zbox {
    width: 124px;
    padding: 3px 2px 2px 5px;
    border: 1px solid #000;
}
.sv {
    padding: 0;
    line-height: 33px;
    background: var(--pale);
    border: 1px solid #000;
    border-width: 1px 0;
}
.svbox {
    width: 68px;
    padding: 3px 2px 2px 5px;
    background: #18e818;
    border: 1px solid #000;
    border-left: 0;
}
.show {
    display: flex;
    gap: 4px;
    margin: 6px 0 0 4px;
    white-space: nowrap;
}
.show input {
    width: 14px;
    height: 14px;
    margin-top: 2px;
    border: 2px solid;
    border-color: var(--teal-hi) var(--teal-lo) var(--teal-lo) var(--teal-hi);
}
.marks {
    display: flex;
    gap: 4px;
    padding: 2px;
}
.viewer .marks {
    justify-content: flex-end;
    padding-right: 6px;
}
.feature {
    height: 23px;
    border: 2px solid #000;
    border-width: 2px 1px;
    line-height: 20px;
    text-align: center;
}
.erf-line {
    height: 20px;
    padding-left: 2px;
    background: var(--cream);
    border: 1px solid #000;
    border-top: 0;
    line-height: 20px;
}
.vfoot {
    height: 34px;
    padding: 2px 2px 2px 3px;
    display: flex;
    gap: 4px;
    background: var(--pale);
}
.vfoot .wide {
    flex: 1;
    padding-top: 1px;
}

/* checklist */
.checklist {
    left: 1656px;
    top: 80px;
    width: 384px;
    height: 719px;
}
.cmenu {
    height: 35px;
    background: var(--pale);
}
.cmenu nav {
    width: 137px;
    height: 35px;
    display: flex;
    gap: 16px;
    padding: 6px 12px;
    font: bold 15px/18px var(--serif);
    border: 2px solid;
    border-color: var(--pale-hi) var(--pale-lo) var(--pale-lo) var(--pale-hi);
    outline: 1px solid #000;
}
.cname {
    height: 21px;
    background: var(--pale);
    border: 1px solid #000;
    font: bold 15px/19px var(--serif);
    text-align: center;
}
.cbody {
    flex: 1;
    min-height: 0;
    display: flex;
    justify-content: space-between;
    padding: 3px 3px 3px 2px;
}
.checks {
    width: 356px;
    align-self: flex-start;
    border: 1px solid #000;
    border-bottom-width: 2px;
}
.check {
    height: 119px;
    background: var(--pale);
    border-bottom: 2px solid var(--teal);
}
.check:last-child {
    height: 116px;
    border: 0;
}
.c1 {
    height: 30px;
    display: flex;
    align-items: flex-start;
    padding: 0 1px 0 4px;
}
.c1 input[type=checkbox], .c1 input[type=text] {
    border: 2px solid;
    border-color: var(--pale-lo) var(--pale-hi) var(--pale-hi) var(--pale-lo);
}
.c1 input[type=checkbox] {
    position: relative;
    width: 14px;
    height: 14px;
    margin-top: 4px;
    flex: none;
}
.c1 input[type=checkbox]::after {
    content: "";
    position: absolute;
    left: 2px;
    top: -2px;
    width: 4px;
    height: 9px;
    border: solid #c01050;
    border-width: 0 2px 2px 0;
    transform: rotate(35deg);
}
.cico {
    width: 20px;
    height: 20px;
    margin: 4px 5px 0 19px;
    flex: none;
}
.c1 b {
    flex: 1;
    min-width: 0;
    font: bold 15px/26px var(--serif);
    white-space: nowrap;
    overflow: hidden;
}
.c1 .erf {
    width: 44px;
    height: 30px;
    font-weight: normal;
}
.c1 input[type=text] {
    width: 105px;
    height: 30px;
    margin: 0 4px;
    padding: 0 4px 10px 5px;
    font-weight: normal;
}
.c1 .q {
    width: 31px;
    height: 30px;
    padding: 2px;
    font: bold 24px/20px "Liberation Sans", sans-serif;
    outline: 1px solid #000;
    outline-offset: -6px;
}
.c2 {
    height: 25px;
    margin-top: 3px;
    display: flex;
    gap: 4px;
    padding: 0 2px;
}
.c2 .btn {
    flex: 1;
    padding-bottom: 2px;
    font-family: var(--serif);
}
.c3 {
    height: 33px;
    margin-top: 3px;
    display: flex;
    align-items: center;
    gap: 4px;
    padding-left: 3px;
}
.c3 span {
    flex: 1;
    min-width: 0;
    padding: 0 24px 2px 0;
    font: 15px/15px var(--mono);
    text-align: center;
    white-space: nowrap;
}
.c3 > b {
    width: 17px;
    height: 33px;
    background: #f11;
    border: 1px solid #000;
    font: bold 15px/30px var(--serif);
    text-align: center;
}
.run {
    width: 30px;
    height: 30px;
    flex: none;
    background: var(--teal);
    border-color: var(--teal-hi) var(--teal-lo) var(--teal-lo) var(--teal-hi);
    display: flex;
    align-items: center;
    justify-content: center;
}
.run svg {
    width: 24px;
    height: 24px;
    flex: none;
}
.c4 {
    height: 22px;
    padding-left: 3px;
    background: var(--cream);
    border: solid #000;
    border-width: 1px 0 2px;
    font-weight: normal;
    line-height: 20px;
    white-space: nowrap;
}
.cfoot, .hfoot {
    height: 28px;
    display: flex;
    padding: 2px;
    background: var(--pale);
}
.cfoot .btn, .hfoot .btn, .mfoot .btn {
    flex: 1;
}
.hfoot .btn {
    padding-top: 2px;
}

/* histogram */
.histogram {
    left: 1488px;
    top: 350px;
    width: 467px;
}
.hbody {
    height: 292px;
    display: flex;
    gap: 3px;
    padding: 3px 5px 1px 4px;
    border-top: 1px solid #000;
}
.hleft {
    width: 102px;
    display: flex;
    flex-direction: column;
    background: var(--pale);
    border: 1px solid #000;
}
.radios {
    height: 138px;
    padding-top: 1px;
    border: 1px solid #000;
    border-width: 1px 1px 1px 0;
}
.radios label {
    height: 27px;
    display: flex;
    align-items: center;
    gap: 5px;
    padding-left: 6px;
}
input[type=radio] {
    width: 10px;
    height: 10px;
    margin: 0 2px;
    flex: none;
    transform: rotate(45deg);
    border: 2px solid;
    border-color: var(--pale-hi) var(--pale-lo) var(--pale-lo) var(--pale-hi);
}
input[type=radio]:checked {
    background: #c80040;
    border-color: var(--pale-lo) #f0ffff #f0ffff var(--pale-lo);
}
.hleft .scroller {
    flex: 1;
    padding-right: 1px;
}
.histogram .hright {
    flex: 1;
    min-width: 0;
    display: flex;
    flex-direction: column;
    background: var(--pale);
    border: 1px solid #000;
    border-width: 2px 1px 1px 2px;
}
.chart {
    height: 205px;
    overflow: hidden;
}
.ctitle {
    width: 270px;
    height: 22px;
    margin: 3px 0 0 45px;
    padding-left: 3px;
    background: #b0ffff;
    border: 1px solid #000;
    box-shadow: 3px 2px #85a0a0;
    font-style: italic;
    line-height: 24px;
    white-space: nowrap;
}
.bars {
    height: 143px;
    display: flex;
    align-items: flex-end;
    padding-left: 4px;
    border-bottom: 3px solid #000;
}
.bars div {
    width: 55px;
    text-align: center;
}
.bars span {
    display: block;
    line-height: 16px;
}
.bars i {
    display: block;
    background: #f11;
    border: 1px solid #000;
    border-width: 1px 1px 0 0;
}
.bars div:first-child i, .bins pre:first-child {
    border-left-width: 1px;
}
.bins {
    display: flex;
    margin: 2px 0 0 4px;
}
.bins pre {
    width: 55px;
    height: 28px;
    padding: 2px 0 0 9px;
    background: #f11;
    border: 1px solid #000;
    border-left-width: 0;
    line-height: 15px;
}
.hright .hsb {
    margin-bottom: 1px;
}
.reso-row {
    flex: 1;
    min-height: 0;
    display: flex;
    border-top: 1px solid #000;
}
.reso-row .scroller {
    width: 110px;
}
.reso {
    flex: 1;
    display: flex;
    flex-direction: column;
    padding: 2px 3px;
    border: 2px solid #000;
    border-top-width: 1px;
}
.reso label {
    text-align: center;
}
.reso output {
    padding: 4px 2px 2px;
}
.reso input {
    width: 100%;
    height: 14px;
    background: #85b8b8;
    border: 2px solid;
    border-color: var(--pale-lo) var(--pale-hi) var(--pale-hi) var(--pale-lo);
}
.reso input::-webkit-slider-thumb {
    appearance: none;
    width: 30px;
    height: 11px;
    background: linear-gradient(to right, var(--pale) 13px, var(--pale-lo) 13px, var(--pale-lo) 14px, var(--pale) 14px);
    border: 2px solid;
    border-color: var(--pale-hi) var(--pale-lo) var(--pale-lo) var(--pale-hi);
}
.sash {
    height: 3px;
    margin: 3px 0 4px;
    background: var(--teal-hi);
    border-top: 1px solid var(--teal-lo);
}
.sash::after {
    content: "";
    position: relative;
    display: block;
    width: 9px;
    height: 9px;
    margin: -4px 11px 0 auto;
    background: var(--teal);
    border: 1px solid;
    border-color: var(--teal-hi) var(--teal-lo) var(--teal-lo) var(--teal-hi);
}
.board {
    height: 163px;
    margin: 0 5px 0 4px;
    padding-top: 18px;
    border: 2px solid;
    border-color: #000 #000 #000 var(--teal-lo);
}
.board svg {
    width: 117px;
    height: 123px;
    margin: 0 auto;
    overflow: visible;
}
.mrow {
    height: 46px;
    display: flex;
    gap: 4px;
    padding: 2px 5px;
    border-bottom: 1px solid #000;
}
.mrow .btn.ico, .mrow .btn.big {
    height: 39px;
    margin-top: 1px;
}
.mrow .big {
    width: 38px;
    padding: 2px;
}
.mrow .big svg {
    width: 30px;
    height: 30px;
}
.mtext {
    flex: 1;
    padding-left: 3px;
    background: var(--pale);
    border: 1px solid #000;
    line-height: 40px;
}

/* measure popup */
.measure {
    left: 1864px;
    top: 246px;
    width: 184px;
    height: 253px;
}
.mhead {
    height: 17px;
    background: var(--pale);
    border: 1px solid #000;
    line-height: 16px;
    text-align: center;
}
.modes label {
    height: 29px;
    display: flex;
    align-items: center;
    gap: 5px;
    padding: 1px 0 0 5px;
    background: var(--pale);
    border: 1px solid #000;
    border-bottom-width: 2px;
    white-space: nowrap;
}
.mfoot {
    height: 29px;
    margin-top: auto;
    padding: 2px;
    display: flex;
    border: 1px solid #000;
}

/* windows taskbar */
.taskbar {
    height: 40px;
    flex: none;
    display: flex;
    background: #101010;
    color: #fff;
    font: 12px/18px var(--ui);
}
.taskbar button {
    background: none;
    border: 0;
}
.start {
    width: 51px;
    padding-left: 16px;
}
.start svg {
    width: 16px;
    height: 16px;
}
.tasks {
    flex: 1;
    display: flex;
}
.tasks button {
    position: relative;
    flex: 1;
    min-width: 0;
    display: flex;
    align-items: center;
    gap: 5px;
    padding-left: 9px;
    white-space: nowrap;
}
.tasks svg {
    width: 23px;
    height: 23px;
    flex: none;
}
.tasks button::after {
    content: "";
    position: absolute;
    left: 4px;
    right: 4px;
    bottom: 0;
    height: 2px;
    background: #a9d4f2;
}
.tasks .active {
    background: #333;
}
.tasks .active::after {
    left: 0;
    right: 0;
}
.tray {
    width: 130px;
    display: flex;
    align-items: center;
    gap: 9px;
    padding-left: 7px;
}
.tray svg {
    width: 16px;
    height: 16px;
}
.tray span {
    width: 14px;
}
.time {
    width: 74px;
    padding-top: 2px;
    text-align: center;
}
.notes {
    width: 55px;
    padding: 7px 0 0 13px;
}
.notes svg {
    width: 26px;
    height: 32px;
}
```
